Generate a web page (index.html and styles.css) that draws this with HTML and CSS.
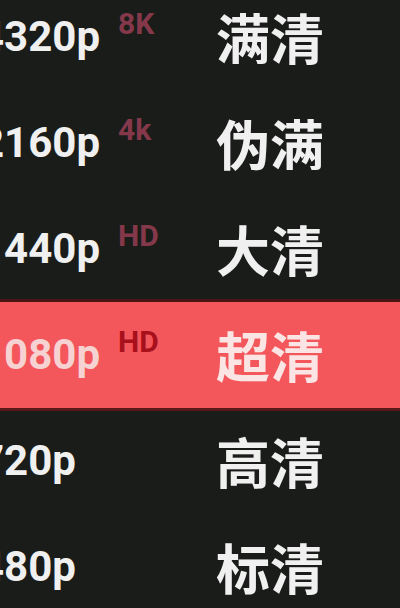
FILE: index.html
```html
<!DOCTYPE html>
<html lang="zh-CN">
<head>
<meta charset="utf-8">
<title>清晰度</title>
<link rel="stylesheet" href="styles.css">
</head>
<body>
<ul class="menu">
  <li class="row"><span class="res">4320p</span><span class="badge">8K</span><span class="name">满清</span></li>
  <li class="row"><span class="res">2160p</span><span class="badge">4k</span><span class="name">伪满</span></li>
  <li class="row"><span class="res">1440p</span><span class="badge">HD</span><span class="name">大清</span></li>
  <li class="row active"><span class="res">1080p</span><span class="badge">HD</span><span class="name">超清</span></li>
  <li class="row"><span class="res">720p</span><span class="badge"></span><span class="name">高清</span></li>
  <li class="row"><span class="res">480p</span><span class="badge"></span><span class="name">标清</span></li>
</ul>
</body>
</html>
```
FILE: styles.css
```css
html, body {
  margin: 0;
  padding: 0;
  background: #1a1c1a;
  width: 400px;
  height: 608px;
  overflow: hidden;
}
.menu {
  list-style: none;
  margin: -16px 0 0 0;
  padding: 0;
  display: flex;
  flex-direction: column;
}
.row {
  height: 106px;
  display: grid;
  grid-template-columns: 138px 98px 1fr;
  align-items: center;
  margin-left: -20px;
}
.res {
  font-family: Roboto, "Liberation Sans", sans-serif;
  font-weight: 700;
  font-size: 42px;
  line-height: 1;
  color: #f0f0f0;
  white-space: nowrap;
}
.badge {
  align-self: start;
  margin-top: 25px;
  font-family: Roboto, "Liberation Sans", sans-serif;
  font-weight: 700;
  font-size: 30px;
  line-height: 1;
  color: #84384a;
}
.name {
  font-family: "Noto Sans CJK SC", sans-serif;
  font-weight: 700;
  font-size: 54px;
  line-height: 1;
  color: #f0f0f0;
}
.active {
  background: #f4575b;
  box-shadow: 0 -3px 0 #4a1414, 0 3px 0 #5a1818;
}
.active .res { color: #f6d2d2; }
.active .badge { color: #a8101c; }
.active .name { color: #fbe4e4; }
```
